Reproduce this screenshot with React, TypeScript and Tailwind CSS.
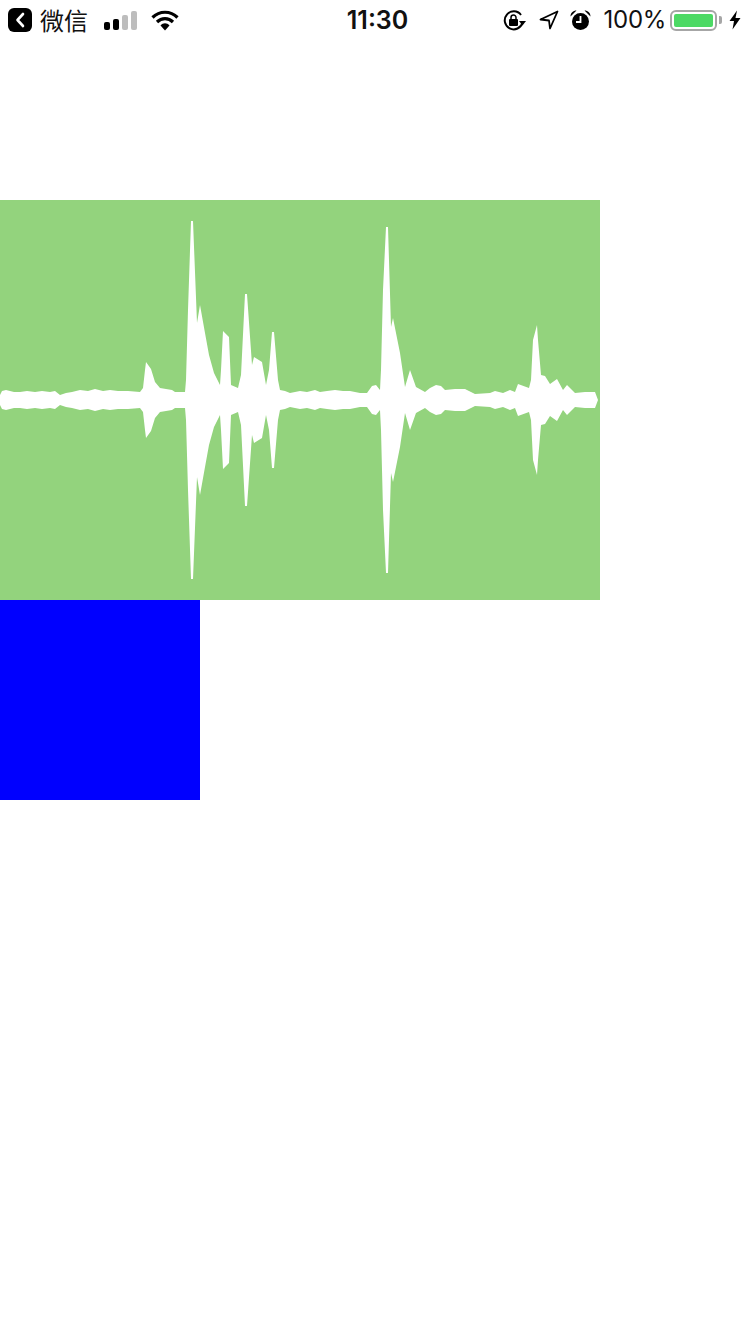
const upper: [number, number][] = [
  [0, 5], [2, 9], [6, 10], [10, 9], [14, 8], [20, 8], [27, 9], [35, 8], [42, 9], [50, 8], [55, 9], [60, 5],
  [66, 7], [72, 8], [80, 10], [88, 9], [95, 11], [103, 9], [110, 10], [118, 9], [128, 9], [140, 8],
  [143, 12], [145, 30], [146, 38], [151, 31], [155, 18], [160, 12], [172, 10], [175, 8], [185, 8], [186, 20], [188, 90],
  [191, 179], [193, 179], [197, 77], [200, 95], [205, 67], [209, 45], [214, 27], [220, 15], [221, 30], [223, 69],
  [229, 63], [231, 15], [238, 12], [241, 25], [245, 106], [247, 106], [252, 35], [254, 43], [262, 38], [266, 15],
  [269, 30], [272, 68], [274, 68], [278, 20], [280, 10], [285, 9], [290, 7], [300, 9], [307, 8], [315, 10],
  [320, 8], [327, 9], [335, 10], [343, 9], [350, 9], [360, 7], [367, 7], [372, 14], [376, 15], [380, 10],
  [381, 30], [383, 110], [386, 173], [388, 173], [391, 73], [393, 82], [400, 47], [405, 13], [410, 30], [416, 13],
  [425, 8], [430, 12], [436, 15], [441, 14], [445, 10], [455, 11], [465, 11], [475, 6], [490, 7], [495, 9],
  [503, 7], [510, 10], [515, 8], [518, 16], [529, 12], [531, 20], [533, 60], [537, 75], [538, 60], [541, 25],
  [545, 24], [550, 16], [557, 21], [563, 10], [567, 15], [575, 7], [585, 8], [595, 8], [598, 0],
];

const wavePath =
  upper.map(([x, h], i) => `${i === 0 ? "M" : "L"}${x} ${200 - h}`).join(" ") +
  " " +
  [...upper].reverse().map(([x, h]) => `L${x} ${200 + h}`).join(" ") +
  " Z";

const StatusLeft = () => (
  <div className="flex flex-1 items-center pl-2">
    <div className="flex h-6 w-6 items-center justify-center rounded-[6px] bg-black">
      <svg width="12" height="16" viewBox="0 0 12 16" fill="none">
        <path d="M9 2 L3.5 8 L9 14" stroke="white" strokeWidth="2.6" strokeLinecap="round" strokeLinejoin="round" />
      </svg>
    </div>
    <span className="ml-2 text-[24px] leading-none text-[#111] [font-family:'Noto_Sans_CJK_SC',sans-serif]">
      微信
    </span>
    <div className="ml-4 flex h-[19px] items-end gap-[3px]">
      <div className="h-[8px] w-[6px] rounded-[2px] bg-black" />
      <div className="h-[11px] w-[6px] rounded-[2px] bg-black" />
      <div className="h-[15px] w-[6px] rounded-[2px] bg-[#bdbdbd]" />
      <div className="h-[19px] w-[6px] rounded-[2px] bg-[#bdbdbd]" />
    </div>
    <svg className="ml-[14px]" width="28" height="21" viewBox="0 0 28 21" fill="none">
      <path d="M1.5 7.5 C8.5 0.5 19.5 0.5 26.5 7.5" stroke="black" strokeWidth="3.2" />
      <path d="M6 12 C10.5 7.5 17.5 7.5 22 12" stroke="black" strokeWidth="3.2" />
      <path d="M9.5 15.5 C12 12.6 16 12.6 18.5 15.5 L14 20.5 Z" fill="black" />
    </svg>
  </div>
);

const StatusRight = () => (
  <div className="flex flex-1 items-center justify-end pr-[9px]">
    <svg width="23" height="21" viewBox="0 0 23 21" fill="none">
      <path d="M19.5 12.5 A9 9 0 1 1 18 5" stroke="black" strokeWidth="2" />
      <path d="M16 11 L23 11 L19.5 15.5 Z" fill="black" />
      <rect x="6" y="9" width="9" height="7" rx="1" fill="black" />
      <path d="M8 9.5 V7.5 A2.5 2.5 0 0 1 13 7.5 V9.5" stroke="black" strokeWidth="1.5" />
    </svg>
    <svg className="ml-[13px]" width="20" height="20" viewBox="0 0 20 20" fill="none">
      <path d="M18.5 1.5 L1.5 9.5 L10 10.5 L11 18.5 Z" stroke="black" strokeWidth="1.8" strokeLinejoin="round" />
    </svg>
    <svg className="ml-[11px]" width="21" height="21" viewBox="0 0 21 21" fill="none">
      <circle cx="10.5" cy="11.5" r="8.5" fill="black" />
      <path d="M10.5 6 V12 H6" stroke="white" strokeWidth="1.8" />
      <path d="M0.5 6.5 C0.5 3 3 0.5 6.5 0.5 Z M20.5 6.5 C20.5 3 18 0.5 14.5 0.5 Z" fill="black" />
    </svg>
    <span className="ml-[13px] text-[24px] leading-none tracking-[-0.3px] text-[#111] [font-family:Inter,sans-serif]">
      100%
    </span>
    <div className="ml-[4px] flex items-center">
      <div className="flex h-[21px] w-[47px] rounded-[6px] border-2 border-[#a6a6a6] p-[2px]">
        <div className="flex-1 rounded-[2px] bg-[#4cd964]" />
      </div>
      <div className="ml-[2px] h-[8px] w-[3px] rounded-r-[2px] bg-[#a6a6a6]" />
    </div>
    <svg className="ml-[7px]" width="12" height="20" viewBox="0 0 12 20">
      <path d="M8 0.5 L0.5 11 H5 L3.5 19.5 L11.5 8 H6.5 Z" fill="black" />
    </svg>
  </div>
);

export default function App() {
  return (
    <div className="min-h-[1334px] w-full bg-white">
      <div className="flex h-10 items-center">
        <StatusLeft />
        <span className="ml-[6px] text-[25px] font-semibold leading-none text-[#111] [font-family:Inter,sans-serif]">
          11:30
        </span>
        <StatusRight />
      </div>
      <div className="mt-[160px] h-[400px] w-[600px] bg-[#93d37d]">
        <svg width="600" height="400" viewBox="0 0 600 400" className="block">
          <path d={wavePath} fill="white" />
        </svg>
      </div>
      <div className="h-[200px] w-[200px] bg-[#0000ff]" />
    </div>
  );
}
